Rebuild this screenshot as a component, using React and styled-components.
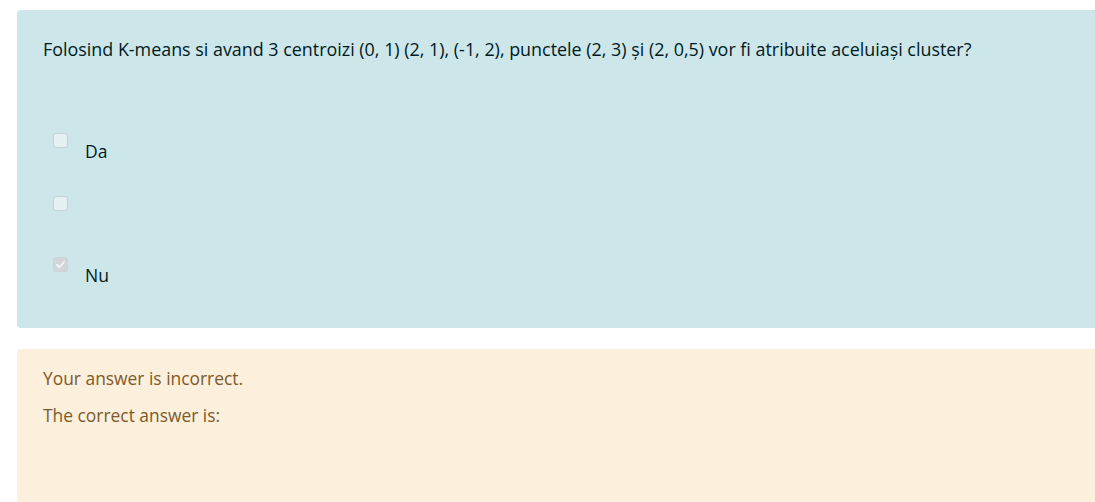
import React from 'react';
import styled, { createGlobalStyle } from 'styled-components';

const GlobalStyle = createGlobalStyle`
  body {
    margin: 0;
    background: #ffffff;
    font-family: "Open Sans", "Noto Sans", sans-serif;
    overflow: hidden;
  }
`;

const Page = styled.div`
  padding: 10px 0 0 17px;
  height: 502px;
  box-sizing: border-box;
  overflow: hidden;
`;

const Formulation = styled.div`
  background: #cce6ea;
  color: #001a1e;
  border-radius: 4px 0 0 4px;
  padding: 26px 0 0 26px;
  height: 318px;
  box-sizing: border-box;
`;

const QText = styled.p`
  margin: 0;
  font-size: 17.9px;
  line-height: 26px;
`;

const Answers = styled.div`
  margin-top: 71px;
  padding-left: 10px;
  display: flex;
  flex-direction: column;
`;

const Option = styled.div`
  display: flex;
  align-items: flex-start;
  height: ${p => p.$h}px;
`;

const Box = styled.span`
  width: 13px;
  height: 13px;
  border-radius: 3px;
  border: 1px solid ${p => (p.$checked ? '#cfd2d4' : '#c4d3d6')};
  background: ${p => (p.$checked ? '#d2d6d8' : '#e6eff1')};
  display: flex;
  align-items: center;
  justify-content: center;
  flex-shrink: 0;
`;

const Label = styled.span`
  margin: 7px 0 0 17px;
  font-size: 17.5px;
  line-height: 22px;
  color: #001a1e;
`;

const Feedback = styled.div`
  margin-top: 21px;
  background: #fcefdc;
  color: #7d5a29;
  border-radius: 4px 0 0 0;
  padding: 18px 26px 0;
  height: 200px;
  box-sizing: border-box;
`;

const FText = styled.p`
  margin: 0 0 15px;
  font-size: 17.4px;
  line-height: 22px;
`;

const Check = () => (
  <svg width="11" height="11" viewBox="0 0 12 12">
    <path d="M2 6.3 L4.8 9 L10 3" fill="none" stroke="#f2f3f4" strokeWidth="2" strokeLinecap="round" strokeLinejoin="round" />
  </svg>
);

export default function App() {
  return (
    <>
      <GlobalStyle />
      <Page>
        <Formulation>
          <QText>
            Folosind K-means si avand 3 centroizi (0, 1) (2, 1), (-1, 2), punctele (2, 3) și (2, 0,5) vor fi atribuite aceluiași cluster?
          </QText>
          <Answers>
            <Option $h={63}>
              <Box />
              <Label>Da</Label>
            </Option>
            <Option $h={61}>
              <Box />
            </Option>
            <Option $h={40}>
              <Box $checked>
                <Check />
              </Box>
              <Label>Nu</Label>
            </Option>
          </Answers>
        </Formulation>
        <Feedback>
          <FText>Your answer is incorrect.</FText>
          <FText>The correct answer is:</FText>
        </Feedback>
      </Page>
    </>
  );
}
